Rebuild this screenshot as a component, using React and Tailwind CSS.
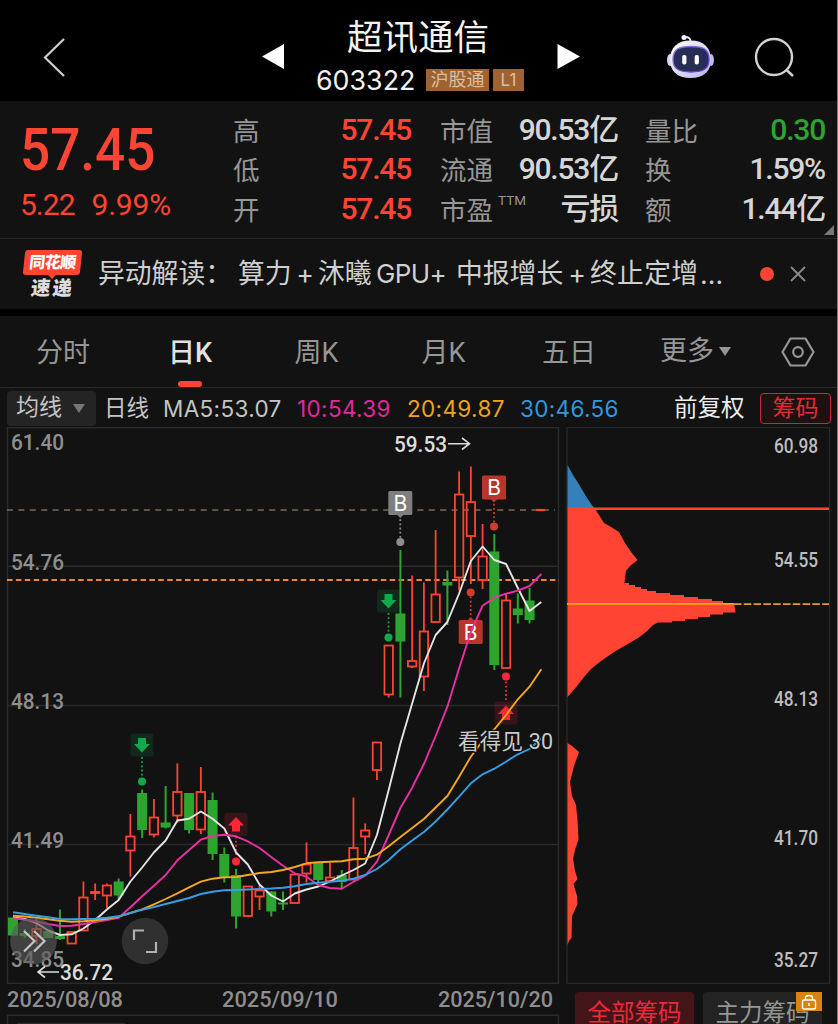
import { Fragment } from 'react';

const GREEN = '#2ea430';
const RED = '#ff4433';

const quotes = [
  ['高', '57.45', '市值', '90.53亿', '量比', '0.30'],
  ['低', '57.45', '流通', '90.53亿', '换', '1.59%'],
  ['开', '57.45', '市盈', '亏损', '额', '1.44亿'],
];

// [bodyTop, bodyBottom, wickTop, wickBottom, up]
const candles = [
  [917.5, 935.5, 917.5, 935.5, 0],
  [933, 936, 929, 938, 0],
  [929, 936, 918, 944, 1],
  [931, 938, 931, 938, 0],
  [936, 939, 909.5, 940, 0],
  [932, 943.5, 932, 943.5, 1],
  [897.5, 930.5, 881.5, 930.5, 1],
  [892, 893, 883.5, 900, 1],
  [885.5, 895.5, 883.5, 908, 1],
  [881.5, 895.5, 878.5, 899, 0],
  [836.5, 850.5, 814, 876.5, 1],
  [793, 830, 789.5, 838, 0],
  [817.5, 834.5, 799, 837.5, 1],
  [822.5, 827.5, 786, 828.5, 0],
  [792, 815.5, 763.5, 823, 1],
  [793, 830, 793, 833.5, 0],
  [792, 829.5, 767, 834, 1],
  [800, 854, 792.5, 860, 0],
  [854, 877, 847.5, 882.5, 0],
  [875, 916.5, 869, 928.5, 0],
  [886.5, 916, 886.5, 916, 1],
  [890.5, 896.5, 885, 910, 1],
  [891.5, 911.5, 891.5, 916.5, 0],
  [902.5, 904.5, 891.5, 910, 0],
  [874.5, 903, 874.5, 903, 1],
  [864.5, 873.5, 842.5, 882.5, 1],
  [862.5, 880, 862.5, 882.5, 0],
  [877.5, 881, 862.5, 881, 1],
  [875, 882, 870, 888, 0],
  [848, 879.5, 797.5, 879.5, 1],
  [830.5, 836.5, 823.5, 854, 1],
  [742.5, 770, 742.5, 780, 1],
  [645.5, 694.5, 645.5, 697.5, 1],
  [613.5, 641.5, 550, 697.5, 0],
  [661, 666.5, 575.5, 668, 1],
  [631.5, 676.5, 582.5, 691, 1],
  [594.5, 622, 530, 622, 1],
  [582, 585.5, 570.5, 625, 0],
  [494.5, 577.5, 471.5, 590.5, 1],
  [502, 536, 466.5, 584, 1],
  [556.5, 580, 524, 589, 1],
  [551.5, 665, 534, 670, 0],
  [600.5, 668, 594, 668, 1],
  [608.5, 615, 593.5, 623.5, 0],
  [600.5, 620, 588, 623.5, 0],
];

const averages = [
  {
    color: '#e4e4e4',
    ys: [917.5, 919, 923, 930.5, 935, 934.3, 928.5, 920, 909.5, 900, 881.5, 867.5, 852.5, 840.5, 820.5, 818.7, 811.5, 818.7, 828.5, 852.5, 864.5, 884.5, 895.5, 901.5, 893.5, 889.5, 886.5, 881.5, 875.5, 870, 863.5, 835, 790, 743.5, 703.5, 663.5, 635, 622, 593.5, 561, 546.5, 560, 564, 588, 611, 602],
  },
  {
    color: '#ea2fa6',
    ys: [918.3, 919.8, 921.5, 924, 926, 925.7, 924, 922, 920, 917.7, 907.3, 896.3, 885.7, 875, 860.3, 850, 839.7, 836, 834.7, 836.3, 841.3, 848, 857, 865.7, 873.3, 876.7, 885, 888, 888.7, 881.7, 875.7, 861.7, 835, 808, 787.7, 764, 736, 706.7, 668.3, 631.7, 605.7, 597.7, 593.7, 590.7, 586, 574],
  },
  {
    color: '#f5a81f',
    ys: [915.7, 916.5, 917.7, 919.3, 920.7, 921.7, 921.3, 920.3, 918.7, 916.7, 913, 909.3, 904.3, 899, 893.3, 887.3, 881.7, 878.7, 877.3, 877, 875, 873, 872, 870, 867, 863.3, 862.3, 861.8, 861.3, 859.3, 858.7, 854.7, 846.3, 837, 828, 819, 807.5, 796, 776.7, 756.7, 740.7, 729.3, 715, 699.3, 686.7, 669.3],
  },
  {
    color: '#349fe6',
    ys: [912.3, 914, 915.7, 917.3, 919, 919.3, 919, 918.7, 917.8, 916.3, 913, 909.7, 907, 904, 901, 898, 894, 891.7, 890.3, 890, 889.5, 889, 888.5, 887.7, 886.3, 884, 882.7, 881.7, 880.7, 878.7, 875, 869, 860, 849.3, 840.5, 832, 821.5, 809.5, 796.7, 783.3, 774.3, 768.7, 761.7, 754.3, 749, 738.3],
  },
];

const tabs = [
  { label: '分时', w: 'w-[126px]' },
  { label: '日K', w: 'w-[128px]' },
  { label: '周K', w: 'w-[125px]' },
  { label: '月K', w: 'w-[129px]' },
  { label: '五日', w: 'w-[122px]' },
];

const xAt = (i) => 13 + i * 11.74;

function Label({ x, y, w, size = 22, color = '#8e8e8e', children }) {
  return (
    <text x={x} y={y} fontSize={size} fontWeight="500" fill={color} textLength={w} lengthAdjust="spacingAndGlyphs">
      {children}
    </text>
  );
}

function Candle({ x, data }) {
  const [top, bottom, high, low, up] = data;
  if (!up) {
    return (
      <g fill={GREEN}>
        <rect x={x - 1} y={high} width="2" height={low - high} />
        <rect x={x - 5} y={top} width="10" height={bottom - top} />
      </g>
    );
  }
  return (
    <g stroke={RED} strokeWidth="1.8" fill="none">
      <path d={`M${x} ${high}V${top}M${x} ${bottom}V${low}`} />
      <rect x={x - 4.2} y={top} width="8.4" height={bottom - top} />
    </g>
  );
}

function ArrowMark({ x, y, up, dotY }) {
  const color = up ? '#ff2638' : '#12a84b';
  const from = up && dotY < y ? dotY + 5 : y + 12;
  const to = up && dotY < y ? y - 12 : dotY - 5;
  return (
    <g>
      <rect x={x - 11.5} y={y - 11.5} width="23" height="23" rx="2.5" fill={color} opacity="0.15" />
      <path
        d={up ? 'M0-7.5L8 1H4V7H-4V1H-8Z' : 'M0 7.5L8-1H4V-7H-4V-1H-8Z'}
        transform={`translate(${x} ${y})`}
        fill={color}
      />
      <path d={`M${x} ${from}V${to}`} stroke={color} strokeWidth="1.8" strokeDasharray="1.8 2.4" />
      <circle cx={x} cy={dotY} r="4" fill={color} />
    </g>
  );
}

function BuyMark({ x, y, dotY, color, dot }) {
  const down = dotY > y;
  return (
    <g>
      <path
        d={down ? `M${x} ${y + 12}V${dotY - 4}` : `M${x} ${dotY + 4}V${y - 12}`}
        stroke={dot}
        strokeWidth="1.8"
        strokeDasharray="1.8 2.4"
      />
      <circle cx={x} cy={dotY} r="4" fill={dot} />
      <rect x={x - 12} y={y - 12} width="24" height="24" rx="1.5" fill={color} />
      <path d={down ? 'M-4 11H4L0 15Z' : 'M-4-11H4L0-15Z'} transform={`translate(${x} ${y})`} fill={color} />
      <text x={x} y={y + 7.5} fontSize="21" fill="#fff" textAnchor="middle" className="font-['Inter']">
        B
      </text>
    </g>
  );
}

function KLineChart() {
  return (
    <svg width="563" height="597" viewBox="0 427 563 597" className="block shrink-0 font-['Roboto','Noto_Sans_CJK_SC',sans-serif]">
      <g fill="none" stroke="#2b2b2b" strokeWidth="1.5">
        <rect x="7.5" y="427.7" width="551" height="555.6" />
        <path d="M7 566.3H559M7 705.5H559M7 844.5H559" />
        <path d="M7.5 1024V1015.3H558.5V1024M17 1023.5H125" />
      </g>
      <path d="M7 510H555" stroke="#7d6a52" strokeWidth="1.5" strokeDasharray="6 5.4" />
      <path d="M7 580H559" stroke="#f0862f" strokeWidth="2" strokeDasharray="5.5 3.4" />

      <Label x={11} y={450} w={53}>61.40</Label>
      <Label x={11} y={570} w={53}>54.76</Label>
      <Label x={11} y={708.5} w={53}>48.13</Label>
      <Label x={11} y={848} w={53}>41.49</Label>
      <Label x={11} y={967} w={53}>34.85</Label>

      {candles.map((c, i) => (
        <Candle key={i} x={xAt(i)} data={c} />
      ))}
      <path d="M536 510H545" stroke={RED} strokeWidth="2.2" />

      <ArrowMark x={142} y={745} dotY={781.5} />
      <ArrowMark x={236} y={824.5} dotY={861.5} up />
      <ArrowMark x={388.5} y={601} dotY={637.5} />
      <ArrowMark x={506} y={713} dotY={676.5} up />
      <BuyMark x={400.3} y={503} dotY={542} color="#7f7f7f" dot="#8e8e8e" />
      <BuyMark x={494} y={487.5} dotY={526.5} color="#b9352b" dot="#cf3d31" />
      <BuyMark x={470.7} y={632} dotY={592.5} color="#b9352b" dot="#cf3d31" />

      {averages.map(({ color, ys }) => (
        <polyline
          key={color}
          points={ys.map((y, i) => `${xAt(i)},${y}`).join(' ')}
          fill="none"
          stroke={color}
          strokeWidth="1.9"
          strokeLinejoin="round"
        />
      ))}

      <Label x={394} y={452} w={53} color="#dcdcdc">59.53</Label>
      <path d="M448 443.7H469M462 438L469.5 443.7L462 449.5" fill="none" stroke="#dcdcdc" strokeWidth="1.6" />
      <Label x={60} y={980} w={53} color="#dcdcdc">36.72</Label>
      <path d="M59 972H38M45 966.5L38 972L45 977.5" fill="none" stroke="#dcdcdc" strokeWidth="1.6" />

      <text
        x="458"
        y="749"
        fontSize="21.5"
        fill="#c9c9c9"
        stroke="#111"
        strokeWidth="2.5"
        paintOrder="stroke"
        textLength="95"
      >
        看得见 30
      </text>

      <circle cx="33.5" cy="941" r="23.3" fill="#5a5a5a" opacity="0.65" />
      <path d="M24 931L34.5 941L24 951.5M34 931L44.5 941L34 951.5" fill="none" stroke="#c4c4c4" strokeWidth="2.2" />
      <circle cx="145" cy="941" r="23.3" fill="#303030" />
      <path d="M134 940V930.5H144M146 952H156V942" fill="none" stroke="#b0b0b0" strokeWidth="2.2" />

      <Label x={7} y={1006.5} w={116}>2025/08/08</Label>
      <Label x={222} y={1006.5} w={116}>2025/09/10</Label>
      <Label x={438} y={1006.5} w={115}>2025/10/20</Label>
    </svg>
  );
}

function ChipChart() {
  return (
    <svg width="274" height="557" viewBox="563 427 274 557" className="block font-['Roboto',sans-serif]">
      <rect x="567" y="427.7" width="262.5" height="555.6" fill="none" stroke="#2b2b2b" strokeWidth="1.2" />
      <path d="M567.5 465L573 475L580 486L587 498L594 508H567.5Z" fill="#3580ba" />
      <path
        d="M567.5 507.5H594L599 515L604 523L611 527L619 532L625 543L631 552L637.5 560L630 566L626 571L625 577L624.5 583H629V585H635V587H641V589H647V591H656V593H670V595H684V597H698V599H712V601H723V603H734L735.5 612.5H723V614.5H710V617H698V619H685V621H672V622.5H658L653 625L646 632L638 638L626 645L614 652L601 661L591 669L584 677L577 686L567.5 697Z"
        fill={RED}
      />
      <path
        d="M567.5 743L572 746L579 752L574 766L570 782L572 796L576 805L577.5 820L578.5 839L575 850L573 859L575 871L577.5 879L573.5 884L577 896L577.5 904L572 916L571.5 938L569 941L567.5 945Z"
        fill={RED}
      />
      <path d="M594 508.7H829" stroke={RED} strokeWidth="2.6" />
      <path d="M567 603.8H734" stroke="#ffa51f" strokeWidth="1.8" />
      <path d="M734 604.2H829" stroke="#e79b23" strokeWidth="1.8" strokeDasharray="7.5 2.3" />
      <Label x={774} y={453} w={44} size={19.5} color="#bdbdbd">60.98</Label>
      <Label x={774} y={566.5} w={44} size={19.5} color="#bdbdbd">54.55</Label>
      <Label x={774} y={705.5} w={44} size={19.5} color="#bdbdbd">48.13</Label>
      <Label x={774} y={845} w={44} size={19.5} color="#bdbdbd">41.70</Label>
      <Label x={774} y={966.5} w={44} size={19.5} color="#bdbdbd">35.27</Label>
    </svg>
  );
}

function Robot() {
  return (
    <svg width="52" height="48" viewBox="664 33 52 48">
      <defs>
        <linearGradient id="head" x1="0" y1="0" x2="1" y2="1">
          <stop offset="0" stopColor="#ffffff" />
          <stop offset="1" stopColor="#b9b5ea" />
        </linearGradient>
        <linearGradient id="rim" x1="0" y1="0" x2="1" y2="1">
          <stop offset="0" stopColor="#8e7fe0" />
          <stop offset="1" stopColor="#5a35c8" />
        </linearGradient>
      </defs>
      <path d="M690.5 42Q691 37 685 37" fill="none" stroke="#e9e7f8" strokeWidth="1.8" />
      <circle cx="684" cy="37.5" r="2.5" fill="#f4f3fd" />
      <ellipse cx="670" cy="60" rx="3" ry="6" fill="#d8d6f4" />
      <ellipse cx="711" cy="60" rx="3" ry="6" fill="#b9b6ea" />
      <path d="M690.5 40.5C704 40.5 711 48 711 59.5C711 71 704 78 690.5 78C677 78 670 71 670 59.5C670 48 677 40.5 690.5 40.5Z" fill="url(#head)" />
      <path d="M691 46.500C703 46.500 709 49 709 59.500C709 69 703 72 691 72C679 72 673 69 673 59.500C673 49 679 46.500 691 46.500Z" fill="#272e55" stroke="url(#rim)" strokeWidth="1.3" />
      <rect x="682.2" y="55" width="4.2" height="9.5" rx="1.8" fill="#fff" />
      <rect x="694.7" y="55" width="4.2" height="9.5" rx="1.8" fill="#fff" />
    </svg>
  );
}

function Header() {
  return (
    <header className="flex h-[101px] items-start bg-black">
      <svg width="80" height="101" className="block" fill="none" stroke="#cfcfcf" strokeWidth="2.2">
        <path d="M64 39L45 57.5L64 76" />
      </svg>
      <svg width="215" height="101" className="block" fill="#fff">
        <path d="M204 44V69L182 56.5Z" />
      </svg>
      <div className="flex w-[250px] flex-col items-start pl-[21px]">
        <div className="mt-[13px] h-[49px] pl-[31px] text-[35.5px] leading-[50px] text-[#f2f2f2]">超讯通信</div>
        <div className="flex h-[36px] items-center">
          <span className="w-[110px] font-['Inter'] text-[26.8px] leading-none text-[#f2f2f2]">603322</span>
          <span className="mr-1 flex h-[22px] w-[63px] items-center justify-center bg-[#a0632f] text-[18px] leading-none text-[#d8bfa6]">沪股通</span>
          <span className="flex h-[22px] w-[31px] items-center justify-center bg-[#a0632f] font-['Inter'] text-[17px] leading-none text-[#d8bfa6]">L1</span>
        </div>
      </div>
      <svg width="119" height="101" viewBox="545 0 119 101" className="block" fill="#fff">
        <path d="M557.5 44V69L580 56.5Z" />
      </svg>
      <div className="pt-[33px]">
        <Robot />
      </div>
      <svg width="90" height="101" viewBox="716 0 90 101" className="block" fill="none" stroke="#d2d2d2" strokeWidth="2.4">
        <circle cx="774" cy="57" r="18" />
        <path d="M786 69.5L793 76" />
      </svg>
    </header>
  );
}

function QuotePanel() {
  return (
    <section className="relative flex h-[138px] border-b border-[#262626] bg-[#121212]">
      <div className="w-[233px] pl-[20px] pt-[18px] text-[#ff4433]">
        <div className="origin-left scale-x-90 text-[59px] font-medium leading-[62px]">57.45</div>
        <div className="flex gap-[17px] pt-[4px] text-[30px] leading-[40px] tracking-[-1px]">
          <span>5.22</span>
          <span className="tracking-[-0.2px]">9.99%</span>
        </div>
      </div>
      <div className="grid h-[127px] w-[592px] grid-cols-[60px_118px_29px_76px_102px_27px_60px_120px] grid-rows-3 pt-[9px] text-[30px] font-medium leading-[39px] tracking-[-1.2px]">
        {quotes.map(([a, av, b, bv, c, cv], i) => (
          <Fragment key={a}>
            <span className="pt-[2px] text-[26.5px] font-normal tracking-normal text-[#969696]">{a}</span>
            <span className="text-right text-[#ff4433]">{av}</span>
            <span />
            <span className="relative pt-[2px] text-[26.5px] font-normal tracking-normal text-[#969696]">
              {b}
              {i === 2 && <sup className="absolute left-[58px] top-[-1px] text-[13.5px] leading-[24px]">TTM</sup>}
            </span>
            <span className="whitespace-nowrap text-right text-[#d6d6d6]">{bv}</span>
            <span />
            <span className="pt-[2px] text-[26.5px] font-normal tracking-normal text-[#969696]">{c}</span>
            <span className={`whitespace-nowrap text-right ${i === 0 ? 'text-[#2ea430]' : 'text-[#d6d6d6]'}`}>{cv}</span>
          </Fragment>
        ))}
      </div>
      <svg width="10" height="10" className="absolute bottom-[3px] right-[3px]">
        <path d="M10 0V10H0Z" fill="#777" />
      </svg>
    </section>
  );
}

function NewsBar() {
  return (
    <section className="flex h-[70px] items-center bg-[#121212] pl-[24px]">
      <div className="flex w-[74px] flex-col">
        <div className="flex h-[25px] w-[57px] -skew-x-6 items-center justify-center rounded-[3px] bg-[#ff4433] text-[16px] font-black leading-none tracking-[-0.5px] text-white">
          同花顺
        </div>
        <svg width="57" height="4" className="block">
          <path d="M24 0H32L28 4Z" fill={RED} />
        </svg>
        <div className="flex h-[20px] w-[55px] -skew-x-6 justify-center gap-[2px] text-[19.5px] font-black leading-[19px] text-[#dcdcdc]">
          <span>速</span>
          <span>递</span>
        </div>
      </div>
      <div className="flex w-[662px] whitespace-nowrap text-[26.8px] leading-[40px] text-[#cfcfcf]">
        <span className="w-[140px]">异动解读：</span>
        <span className="w-[54px]">算力</span>
        <span className="w-[26px] text-center font-['Inter']">+</span>
        <span className="w-[58px]">沐曦</span>
        <span className="w-[80px] font-['Inter'] text-[26px] tracking-[-0.6px]">GPU+</span>
        <span className="w-[108px]">中报增长</span>
        <span className="w-[26px] text-center font-['Inter']">+</span>
        <span className="w-[110px] tracking-[0.3px]">终止定增</span>
        <span className="font-['Inter']">…</span>
      </div>
      <span className="size-[14px] rounded-full bg-[#ff4433]" />
      <svg width="16" height="16" className="ml-[16px]" stroke="#8a8a8a" strokeWidth="1.8">
        <path d="M1 1L15 15M15 1L1 15" />
      </svg>
    </section>
  );
}

function TabBar() {
  return (
    <nav className="flex h-[72px] border-b border-[#2a2a2a] bg-[#121212] text-[27px] text-[#969696]">
      {tabs.map(({ label, w }) => (
        <div key={label} className={`${w} flex flex-col items-center`}>
          <span className={`h-[65px] leading-[75px] ${label === '日K' ? 'font-medium text-[#e2e2e2]' : ''}`}>{label}</span>
          {label === '日K' && <span className="h-[6px] w-[24px] rounded-full bg-[#ff4433]" />}
        </div>
      ))}
      <div className="flex w-[150px] items-center gap-[5px] pl-[30px]">
        <span className="leading-[75px]">更多</span>
        <svg width="12" height="9">
          <path d="M0 0H12L6 9Z" fill="#969696" />
        </svg>
      </div>
      <svg width="36" height="71" viewBox="780 316 36 71" fill="none" stroke="#969696" strokeWidth="2.2">
        <path d="M790.5 338.5H805.5L813.5 352L805.5 365.5H790.5L782.5 352Z" strokeLinejoin="round" />
        <circle cx="798" cy="352" r="4.8" />
      </svg>
    </nav>
  );
}

function AverageBar() {
  return (
    <div className="flex h-[39px] items-center bg-[#121212] pl-[7px] pt-[1px] text-[23px]">
      <div className="flex h-[35px] w-[89px] items-center gap-[11px] rounded bg-[#242424] pl-[9px] pt-[1px] text-[#c4c4c4]">
        均线
        <svg width="12" height="9">
          <path d="M0 0H12L6 9Z" fill="#777" />
        </svg>
      </div>
      <span className="w-[67px] pl-[8px] pt-[1px] text-[22.5px] text-[#c4c4c4]">日线</span>
      <div className="flex w-[511px] items-center pt-[1px] font-['Inter'] text-[22.5px] tracking-[0.35px]">
        <span className="w-[134px] text-[#c4c4c4]">MA5:53.07</span>
        <span className="w-[110px] text-[#e3279c]">10:54.39</span>
        <span className="w-[113px] text-[#eda31c]">20:49.87</span>
        <span className="text-[#2f98de]">30:46.56</span>
      </div>
      <span className="w-[86px] pt-[1px] text-[23.5px] text-[#ececec]">前复权</span>
      <span className="flex h-[31px] w-[71px] items-center justify-center rounded border-[1.5px] border-[#cb2734] bg-[#1d1112] leading-none text-[#e62a38]">筹码</span>
    </div>
  );
}

export default function App() {
  return (
    <div className="flex h-[1024px] w-[838px] overflow-hidden bg-black font-['Roboto','Noto_Sans_CJK_SC',sans-serif]">
      <main className="w-[837px] shrink-0">
        <Header />
        <QuotePanel />
        <NewsBar />
        <div className="h-[7px] bg-black" />
        <TabBar />
        <AverageBar />
        <div className="flex h-[597px] bg-[#121212]">
          <KLineChart />
          <div className="w-[274px]">
            <ChipChart />
            <div className="flex gap-[9px] pl-[12px] pt-[8px] text-[23.5px] leading-[43px]">
              <span className="h-[50px] w-[119px] rounded bg-[#431519] text-center text-[#e92a39]">全部筹码</span>
              <span className="relative h-[50px] w-[119px] rounded bg-[#232323] text-center text-[#969696]">
                主力筹码
                <span className="absolute right-0 top-0 flex h-[19px] w-[26px] items-center justify-center bg-[#db8310]">
                  <svg width="16" height="16" fill="none" stroke="#fff" strokeWidth="1.4">
                    <rect x="1.5" y="6" width="13" height="9" rx="1.5" />
                    <path d="M4.5 6V4Q4.5 1.5 8 1.5Q11.5 1.5 11.5 4V6M8 9V12" />
                  </svg>
                </span>
              </span>
            </div>
          </div>
        </div>
      </main>
      <div className="w-px bg-[#808080]" />
    </div>
  );
}
